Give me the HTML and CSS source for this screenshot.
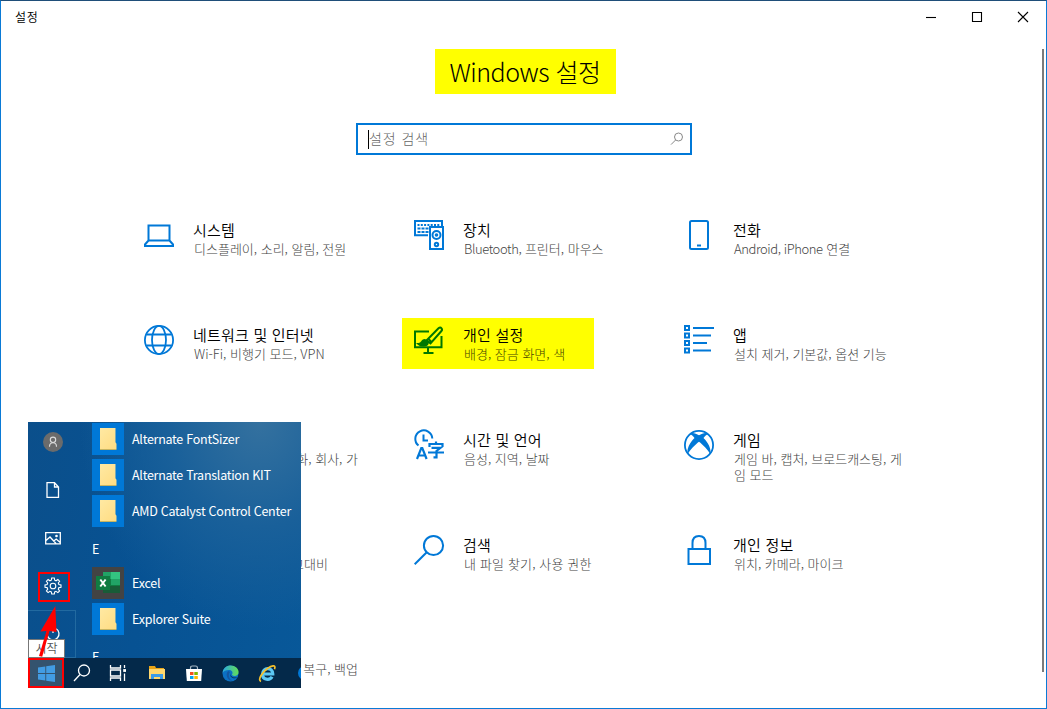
FILE: index.html
```
<!DOCTYPE html>
<html lang="ko">
<head>
<meta charset="utf-8">
<title>설정</title>
<link rel="stylesheet" href="styles.css">
</head>
<body>
<div class="window">
  <header class="titlebar">
    <span class="caption">설정</span>
    <div class="controls">
      <svg width="46" height="32" viewBox="0 0 46 32"><path d="M18 16.5h10"/></svg>
      <svg width="46" height="32" viewBox="0 0 46 32"><path d="M18.5 11.500h9v9h-9z"/></svg>
      <svg width="46" height="32" viewBox="0 0 46 32"><path d="M18 11l10 10M28 11l-10 10"/></svg>
    </div>
  </header>
  <main class="content">
    <h1 class="heading">Windows 설정</h1>
    <div class="search">
      <span class="caret"></span><span class="placeholder">설정 검색</span>
      <svg class="search-icon" width="14" height="14" viewBox="0 0 14 14"><circle cx="8.500" cy="5" r="4"/><path d="M5.600 8L1 12.600"/></svg>
    </div>
    <section class="grid">
      <article class="card">
        <svg class="icon" viewBox="0 0 30 30"><path d="M4.500 5.500h21v15h-21zM4.500 20.500L1 24.500v1.500h28v-1.500l-3.500-4"/></svg>
        <div class="text"><h2 class="name">시스템</h2><p class="desc">디스플레이, 소리, 알림, 전원</p></div>
      </article>
      <article class="card">
        <svg class="icon" viewBox="0 0 30 30"><path d="M14 15.200H1V1h27v5"/><path d="M3.500 5h22" stroke-dasharray="2 1.300"/><path d="M3.500 8.500h11M3.500 12h11" stroke-dasharray="3 1"/><path d="M16 7h13v22H16z"/><circle cx="22.500" cy="15" r="4"/><circle class="fill" cx="22.500" cy="15" r=".8"/><circle cx="22.500" cy="24.500" r="1.700"/></svg>
        <div class="text"><h2 class="name">장치</h2><p class="desc"><span class="latin">Bluetooth,</span> 프린터, 마우스</p></div>
      </article>
      <article class="card">
        <svg class="icon" viewBox="0 0 30 30"><rect x="6" y="1" width="18" height="28" rx="1.500"/><path d="M13 25.500h4"/></svg>
        <div class="text"><h2 class="name">전화</h2><p class="desc"><span class="latin">Android, iPhone</span> 연결</p></div>
      </article>

      <article class="card">
        <svg class="icon thin" viewBox="0 0 30 30"><circle cx="15" cy="15" r="14.100"/><ellipse cx="15" cy="15" rx="7" ry="14.100"/><path d="M2.500 9.500h25M2.500 20.500h25"/></svg>
        <div class="text"><h2 class="name">네트워크 및 인터넷</h2><p class="desc">Wi-Fi, 비행기 모드, VPN</p></div>
      </article>
      <article class="card marked">
        <svg class="icon" viewBox="0 0 30 30"><path d="M15 6.500H1v15.700h26.500V11M14 22.500v5M9.500 28h10"/><path d="M12.500 15.500L24.500 3.300q1.800-1.500 3 0t-.3 3L16.500 18.500zM14.500 14l3.200 3.200"/><path class="fill" d="M4.500 19c2.500 0 3-1.300 3.800-2.600 1.700-2.600 6-.8 5.500 1.600-.8 3.400-7 3.200-9.300 1z"/></svg>
        <div class="text"><h2 class="name">개인 설정</h2><p class="desc">배경, 잠금 화면, 색</p></div>
      </article>
      <article class="card">
        <svg class="icon" viewBox="0 0 30 30"><path d="M1 1h4v4H1zM1 8.500h4v4H1zM1 16h4v4H1zM1 23.500h4v4H1zM9 3h21M9 10.500h18M9 18h14M9 25.500h18"/></svg>
        <div class="text"><h2 class="name">앱</h2><p class="desc">설치 제거, 기본값, 옵션 기능</p></div>
      </article>

      <article class="card tail"><p class="desc">동기화, 회사, 가</p></article>
      <article class="card">
        <svg class="icon" viewBox="0 0 30 30"><path d="M4.500 15.500A8.500 8.500 0 1 1 18.300 8.500M9.500 4.500v6h4.500"/><path class="bold" d="M3 29L7.300 18h1L12.600 29M4.500 25.500h6.500"/><path class="bold" d="M15.500 17v-3h13v3M22 11.500v3M17.500 17.800h9L22.500 21v6.300h-3M14 22.500h16"/></svg>
        <div class="text"><h2 class="name">시간 및 언어</h2><p class="desc">음성, 지역, 날짜</p></div>
      </article>
      <article class="card">
        <svg class="icon thin" viewBox="0 0 30 30"><circle cx="15" cy="15" r="14.100"/><path class="fill" stroke="none" d="M5.500 4C8 1.800 12 3.500 15 5.300c3-1.800 7-3.500 9.500-1.300-1.500.3-3.500 2-5 4 4.700 4.700 8 10.500 6.800 16.500C24 19.500 18.500 14.500 15 11.800 11.500 14.500 6 19.500 3.700 24.500 2.500 18.500 5.800 12.700 10.500 8 9 6 7 4.300 5.500 4z"/></svg>
        <div class="text"><h2 class="name">게임</h2><p class="desc">게임 바, 캡처, 브로드캐스팅, 게<br>임 모드</p></div>
      </article>

      <article class="card tail contrast"><p class="desc">고대비</p></article>
      <article class="card">
        <svg class="icon" viewBox="0 0 30 30"><circle cx="19.500" cy="10.500" r="9.600"/><path d="M12.500 17.500L.7 29.300"/></svg>
        <div class="text"><h2 class="name">검색</h2><p class="desc find">내 파일 찾기, 사용 권한</p></div>
      </article>
      <article class="card">
        <svg class="icon" viewBox="0 0 30 30"><path d="M4.500 14h21.500v15H4.500zM8.500 14V8q0-7 6.500-7t6.500 7v6"/></svg>
        <div class="text"><h2 class="name">개인 정보</h2><p class="desc">위치, 카메라, 마이크</p></div>
      </article>

      <article class="card tail"><p class="desc">복구, 백업</p></article>
    </section>
  </main>
  <div class="scrollbar"></div>
</div>

<aside class="start">
  <div class="menu">
    <nav class="rail">
      <span class="slot"><svg width="20" height="20" viewBox="0 0 20 20"><circle cx="10" cy="10" r="10" fill="#6b6b6b"/><g fill="none" stroke="#ddd" stroke-width="1.100"><circle cx="10" cy="7.800" r="2.700"/><path d="M6.500 14.800q0-4 3.500-4t3.500 4"/></g></svg></span>
      <span class="slot"><svg class="line" width="14" height="16" viewBox="0 0 14 16"><path d="M1 .7h7.500L12.500 5v10.300H1zM8.500.7V5h4"/></svg></span>
      <span class="slot"><svg class="line" width="16" height="13" viewBox="0 0 16 13"><path d="M.7.700h14.600v11.200H.7zM1 8.500L5 5l6 6.500M8.800 9l2.400-2 4 3.500"/><circle cx="11.500" cy="4" r=".7"/></svg></span>
      <span class="slot"><svg class="line gear" width="18" height="18" viewBox="0 0 18 18"><path d="M7.700 1h2.600l.4 2.200 1.300.6L13.900 2.500l1.700 1.700L14.300 6l.6 1.500 2.100.4v2.300l-2.100.4-.6 1.500 1.300 1.800-1.700 1.700-1.900-1.300-1.300.6L10.300 17H7.700l-.4-2.100-1.400-.6-1.800 1.300-1.700-1.700 1.300-1.800-.6-1.500L1 10.200V7.900l2.100-.4L3.700 6 2.400 4.200l1.700-1.700 1.800 1.300 1.400-.6z"/><circle cx="9" cy="9" r="2.800"/></svg></span>
      <span class="slot hover"><svg class="line" width="16" height="16" viewBox="0 0 16 16"><path d="M8 1v6M4.800 2.800a6 6 0 1 0 6.400 0"/></svg></span>
    </nav>
    <div class="apps">
      <div class="app"><span class="tile"><i class="folder"></i></span><span>Alternate FontSizer</span></div>
      <div class="app"><span class="tile"><i class="folder"></i></span><span>Alternate Translation KIT</span></div>
      <div class="app"><span class="tile"><i class="folder"></i></span><span>AMD Catalyst Control Center</span></div>
      <div class="app letter">E</div>
      <div class="app"><span class="tile dark"><svg width="24" height="24" viewBox="0 0 24 24"><path fill="#21a366" d="M7 1h8v7H7z"/><path fill="#33c481" d="M15 1h9v7h-9z"/><path fill="#107c41" d="M7 8h17v7H7z"/><path fill="#185c37" d="M7 15h17v7H7z"/><path fill="#21a366" d="M15 8h9v6h-9z"/><path fill="#107c41" d="M0 5h14v14H0z"/><path stroke="#fff" stroke-width="2" d="M4.300 8.500l5.300 7M9.600 8.500l-5.300 7"/></svg></span><span>Excel</span></div>
      <div class="app"><span class="tile"><i class="folder"></i></span><span>Explorer Suite</span></div>
      <div class="app letter">F</div>
    </div>
  </div>
  <div class="taskbar">
    <span class="task win"><svg width="17" height="17" viewBox="0 0 17 17"><path fill="#429ce3" d="M0 2.400L7.300 1.400V8H0zM8.200 1.200L17 0v8H8.200zM0 9h7.300v6.600L0 14.600zM8.200 9H17v8l-8.800-1.200z"/></svg></span>
    <span class="task"><svg class="line" width="18" height="18" viewBox="0 0 18 18"><circle cx="11" cy="6.500" r="5.500"/><path d="M7 10.500L1 17"/></svg></span>
    <span class="task"><svg class="line" width="18" height="16" viewBox="0 0 18 16"><path d="M1.500 0v3h10V0M1.500 16v-3h10v3M1.500 5h10v6h-10zM15.500 0v3M15.500 8.500V16"/><path stroke-width="2.800" d="M14.200 5.500h2.800"/></svg></span>
    <span class="task wide"><svg width="18" height="16" viewBox="0 0 18 16"><path fill="#e8a417" d="M1 1h6l1 2h8v4H1z"/><path fill="#ffd76e" d="M1 4h16v10H1z"/><path fill="#3b9be8" d="M3 9h12v5h-3v-2H6v2H3z"/></svg></span>
    <span class="task wide"><svg width="16" height="17" viewBox="0 0 16 17"><path fill="none" stroke="#a8b8c4" stroke-width="1.200" d="M4.500 5V3q0-2 2-2h3q2 0 2 2v2"/><path fill="#fff" d="M0 4h16l-.8 12H.8z"/><path fill="#f25022" d="M4 7h3.500v3H4z"/><path fill="#7fba00" d="M8.300 7h3.500v3H8.300z"/><path fill="#00a4ef" d="M4 11h3.500v3H4z"/><path fill="#ffb900" d="M8.300 11h3.500v3H8.300z"/></svg></span>
    <span class="task wide"><svg width="17" height="17" viewBox="0 0 17 17"><defs><linearGradient id="edge"><stop offset="0" stop-color="#2ba8e0"/><stop offset="1" stop-color="#63df55"/></linearGradient></defs><circle cx="8.500" cy="8.500" r="8" fill="#0b70c4"/><path fill="url(#edge)" d="M.5 8C1 3 4.500.4 8.700.4c4.500 0 7.900 3.300 7.900 6.600 0 2.600-2 4-4 4-2.300 0-3-1-2.500-1.700C11.500 7 9.500 5 6.800 5 4 5 1.500 6.300.5 8z"/><path fill="#1456a0" d="M6.300 6C3 9 5 15.500 10.500 16 6.500 13.500 6 9.500 8 7z"/><path fill="#04294a" d="M8.600 7.500c-1.200 3 1.700 5.500 5 4.900l2 .1c-4.200 2.200-8.800-.5-7-5z"/></svg></span>
    <span class="task wide"><svg width="19" height="19" viewBox="0 0 19 19"><path fill="none" stroke="#5cc8f5" stroke-width="3.200" d="M4.500 10h10.300c0-7.400-10.300-7-10.300.2 0 6 7.300 6.400 9.600 2.500"/><path fill="none" stroke="#f5c02c" stroke-width="1.700" d="M3 17.500c-4-1.500 1.500-9.500 6.500-13 3.500-2.600 9-4.500 7 .7"/></svg></span>
    <span class="next-task"></span>
  </div>
  <span class="gear-frame"></span>
  <span class="start-frame"></span>
  <span class="tooltip">시작</span>
  <svg class="arrow" width="34" height="56" viewBox="0 0 34 56"><path fill="#f00" d="M27.300 4L28.500 30 21.500 29 14.200 54.800 11 54 18.500 29 12.500 29.500z"/></svg>
</aside>
</body>
</html>
```

FILE: styles.css
```
* { box-sizing: border-box; }
body {
  margin: 0;
  width: 1047px;
  height: 709px;
  overflow: hidden;
  position: relative;
  background: #fff;
  color: #000;
  font-family: "Noto Sans CJK KR", sans-serif;
}
svg { display: block; flex: none; overflow: visible; }
h1, h2, p { margin: 0; font-weight: 400; }

.window {
  width: 1047px;
  height: 709px;
  border: 1px solid #0a7ad6;
  border-top-color: #1f4e79;
  overflow: hidden;
}
.titlebar { height: 32px; display: flex; justify-content: space-between; }
.caption { padding-left: 14px; font-size: 12px; font-weight: 350; line-height: 32px; letter-spacing: .7px; }
.controls { display: flex; }
.controls path { fill: none; stroke: #000; stroke-width: 1.100; }

.content { display: flex; flex-direction: column; align-items: center; }
.heading {
  width: 181px;
  height: 45px;
  margin: 16px 0 0 3px;
  background: #ff0;
  text-align: center;
  font-size: 25px;
  font-weight: 300;
  letter-spacing: -.5px;
  line-height: 45px;
  white-space: nowrap;
}
.search {
  width: 336px;
  height: 32px;
  margin: 29px 0 0 1px;
  padding: 0 6px 0 10px;
  border: 2px solid #0078d7;
  display: flex;
  align-items: center;
}
.caret { width: 1px; height: 19px; background: #000; }
.placeholder { flex: 1; font-size: 14px; font-weight: 300; color: #666; letter-spacing: .9px; line-height: 26px; padding-bottom: 2px; }
.search-icon { fill: none; stroke: #888; stroke-width: 1; }

.grid {
  align-self: flex-start;
  margin: 65px 0 0 143px;
  display: grid;
  grid-template-columns: repeat(3, 270px);
  grid-auto-rows: 105px;
}
.card { display: flex; align-items: flex-start; gap: 20px; }
.icon { width: 30px; height: 30px; fill: none; stroke: #0078d7; stroke-width: 2; }
.icon.thin { stroke-width: 1.800; }
.icon .fill { fill: #0078d7; }
.icon .bold { stroke-width: 2.200; }
.name { margin-left: -1px; font-size: 15px; font-weight: 350; line-height: 20px; letter-spacing: .2px; white-space: nowrap; }
.desc { font-size: 13px; font-weight: 300; line-height: 16px; margin-top: 1px; color: #444; white-space: nowrap; }
.latin { letter-spacing: -.42px; }
.find { letter-spacing: .15px; }
.marked {
  width: 192px;
  height: 51px;
  margin: -7px 0 0 -12px;
  padding: 7px 0 0 12px;
  align-self: start;
  background: #ff0;
}
.marked .icon { stroke: #007800; }
.marked .icon .fill { fill: #007800; }
.marked .desc { color: #444400; }
.tail { width: 214px; padding-top: 20px; justify-content: flex-end; }
.contrast { width: 184px; }

.scrollbar { position: absolute; left: 1042px; top: 49px; width: 2px; height: 623px; background: #7a7a7a; }

.start {
  position: absolute;
  left: 28px;
  top: 422px;
  width: 273px;
  height: 266px;
  overflow: hidden;
  color: #fff;
  background: radial-gradient(ellipse at 85% 0, #34719f 0, #19609a 28%, transparent 55%), linear-gradient(100deg, #0b4f8b, #075293 45%, #085899);
}
.menu { height: 236px; display: flex; overflow: hidden; }
.rail { flex: 0 0 64px; margin-top: -4px; }
.slot { width: 48px; height: 48px; padding-left: 2px; display: flex; align-items: center; justify-content: center; }
.hover { border: 1px solid #226aa0; border-left: 0; }
.line { fill: none; stroke: #fff; stroke-width: 1.300; }
.gear { stroke-width: 1.100; }
.apps { margin-top: -1px; }
.app { height: 36px; display: flex; align-items: center; gap: 8px; font-size: 12.500px; letter-spacing: -.26px; line-height: 16px; white-space: nowrap; }
.letter { padding-top: 4px; }
.tile { flex: none; width: 32px; height: 32px; background: #0078d7; display: flex; align-items: center; justify-content: center; }
.dark { background: #434343; }
.folder { width: 17px; height: 22px; background: linear-gradient(135deg, #ffe9a3, #ffdc82); border-bottom: 1px solid #c6b463; clip-path: polygon(0 0, 94% 0, 94% 65%, 100% 72%, 100% 100%, 0 100%); }

.taskbar { height: 30px; display: flex; background: #04294a; position: relative; }
.task { flex: none; width: 36px; display: flex; align-items: center; justify-content: center; }
.wide { width: 37px; }
.task.wide:nth-child(4) { margin-left: 2px; }
.win { background: #34536e; }
.next-task { position: absolute; left: 270px; top: 8px; width: 14px; height: 14px; border-radius: 7px; background: #0078d7; }
.gear-frame { position: absolute; left: 10px; top: 150px; width: 32px; height: 30px; border: 2px solid #f00; }
.start-frame { position: absolute; left: 0; top: 236px; width: 36px; height: 30px; border: 2px solid #f00; }
.tooltip {
  position: absolute;
  left: 0;
  top: 217px;
  width: 37px;
  height: 19px;
  border: 1px solid #777;
  background: #fff;
  color: #555;
  font-size: 12px;
  font-weight: 350;
  line-height: 16px;
  text-align: center;
}
.arrow { position: absolute; left: 0; top: 180px; }
```
